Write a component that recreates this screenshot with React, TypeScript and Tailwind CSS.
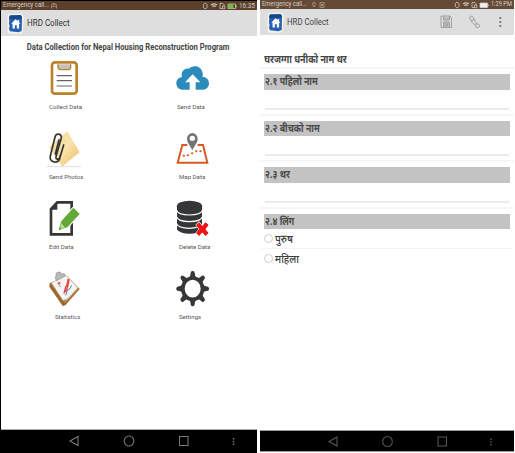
import type { ReactNode } from "react";

function Logo() {
  return (
    <svg viewBox="20 36 52 64" className="block h-[21px] w-[17px] shrink-0">
      <path d="M27 38H64Q70 40 71 48L69 90Q67 98 60 99H29Q22 98 22 90V48Q22 40 27 38Z" fill="#f6f3e4" />
      <path d="M29 43 L62 42 L66 48 L65 91 L55 95 L29 92 L26 84 L28 76 L26 68 L27 58 L26 50Z" fill="#2560b4" />
      <path d="M29 44 L62 43 L65 48 L65 53 L29 56 L27 50Z" fill="#184788" />
      <path d="M46 55 L33 69 H37 V83 H44 V73 H50 V83 H57 V69 H61 L57 64 V57 H53 V60Z" fill="#fff" />
    </svg>
  );
}

function Status({ right }: { right?: boolean }) {
  return (
    <div className={`flex h-[9px] shrink-0 items-center pl-[2px] pr-[3px] leading-[9px] text-[#d5cec8] ${right ? "bg-[#654a35]" : "bg-[#5b3f2b]"}`}>
      <span className={right ? "w-[46px] text-[6.6px] whitespace-nowrap" : "w-[46px] text-[6.8px] whitespace-nowrap"}>
        <span className="inline-block origin-left scale-x-[0.9]">Emergency call...</span>
      </span>
      {right ? (
        <svg viewBox="0 0 16 8" className="ml-[3px] h-2 w-4" fill="none" stroke="#b9aaa0" strokeWidth=".7">
          <path d="M3 1.5a1.4 1.4 0 0 1 1.4 1.5c0 1-1.4 3-1.4 3S1.6 4 1.6 3A1.4 1.4 0 0 1 3 1.5ZM9 1.6h4v4.8H9zM10 3l2 2m0-2-2 2" />
        </svg>
      ) : (
        <svg viewBox="0 0 8 8" className="ml-[1px] h-2 w-2" fill="none" stroke="#a99b91" strokeWidth=".8">
          <path d="M1.5 6.5V3.4Q1.5 1.5 4 1.5T6.5 3.4V6.5M2 5l2-1 2 1M3 2.8h2" />
        </svg>
      )}
      <svg viewBox="0 0 35 8" className="ml-auto h-2 w-[35px] shrink-0" fill="none" stroke="#cfc6bf" strokeWidth=".8">
        <path d="M2 1.4h2.5M2 6.6h2.5M1.4 2v4M5 2v4" />
        <path d="M9 3q3-2.4 6 0M10.3 4.5q1.7-1.3 3.4 0M12 6.2h.1" strokeWidth="1.2" />
        <path d="M18 1.5h3l1 1V4M18 1.5v5h2M20.5 4h2.3v2.7h-2.3z" />
        <path d="M26 2h7.5v4.5H26zM34.3 3.3v2" />
        <path d={right ? "M26.5 2.5h6.5v3.5h-6.5z" : "M26.5 2.5h4.5v3.5h-4.5z"} fill={right ? "#eee" : "#73bd43"} stroke={right ? "#eee" : "#73bd43"} />
      </svg>
      <span className={right ? "ml-[2px] w-[20px] text-[6.6px] whitespace-nowrap" : "ml-[2px] w-[15px] text-[7.4px] whitespace-nowrap"}>
        <span className="inline-block origin-left scale-x-[0.86]">{right ? "1:29 PM" : "16:35"}</span>
      </span>
    </div>
  );
}

function Nav({ right }: { right?: boolean }) {
  return (
    <div className={right ? "h-[22px] shrink-0 border-y border-[#999] bg-black" : "h-6 shrink-0 border-t border-[#aaa] bg-black"}>
      <svg viewBox={right ? "0 2 254 20" : "1 0 256 23"} className={right ? "block h-5 w-[254px]" : "block h-[23px] w-64"} fill="none" stroke={right ? "#565656" : "#777"} strokeWidth="1.1">
        <path d={right ? "M77 8v9l-8-4.5zM178 8h8.5v9H178z" : "M78 6.5v9L70 11zM179.5 6.5h8.5v9h-8.5z"} />
        <ellipse cx={right ? 127.5 : 129} cy={right ? 12.5 : 11} rx="4.8" ry="5" />
        <path d={right ? "M231 9.5v1.4m0 1.4v1.4m0 1.4v1.4" : "M233.5 8v1.4m0 1.4v1.4m0 1.4v1.4"} strokeWidth="1.5" />
      </svg>
    </div>
  );
}

const clipboard = (
  <>
    <rect x="66" y="22" width="74" height="94" rx="9" fill="#fff" stroke="#b9822c" strokeWidth="8" />
    <path d="M84 28v8q0 8 8 8h22q8 0 8-8v-8" fill="#c5c1b9" stroke="#b9822c" strokeWidth="4" />
    <path d="M80 62h46M80 77h46M80 93h46" stroke="#62666b" strokeWidth="3.5" />
  </>
);
const cloud = (
  <>
    <path d="M457 104C445 104 439 94 439 84C439 75 446 67 456 66C451 49 465 37 477 41C486 29 513 31 517 51C520 59 518 63 517 65C529 65 537 74 537 85C537 97 528 104 519 104Z" fill="#2b8bbb" />
    <path d="M488 58 511 82H497V106H479V82H465Z" fill="#fff" />
  </>
);
const photos = (
  <>
    <path d="M50 125H153" stroke="#ddd" strokeWidth="3" />
    <path d="M58 67 112 20 148 82 97 124Z" fill="url(#paper)" stroke="#e4c98c" />
    <defs>
      <linearGradient id="paper" x2="1" y2="1">
        <stop stopColor="#f2d188" />
        <stop offset=".5" stopColor="#fae4ac" />
        <stop offset="1" stopColor="#edbe64" />
      </linearGradient>
    </defs>
    <path d="M99 67 89 98C86 105 76 104 78 95L93 42C99 26 79 22 75 36L61 93C57 112 83 118 89 101L101 60M87 45 76 87" fill="none" stroke="#aaa48f" strokeWidth="6" strokeLinecap="round" />
    <path d="M99 67 89 98C86 105 76 104 78 95L93 42C99 26 79 22 75 36L61 93C57 112 83 118 89 101L101 60M87 45 76 87" fill="none" stroke="#302f2e" strokeWidth="4" strokeLinecap="round" />
  </>
);
const map = (
  <>
    <path d="M472 60H457L443 113H532L519 60H503" fill="none" stroke="#d45b25" strokeWidth="6" />
    <path d="M461 92h1M473 91h1M486 85h1M498 79h1M511 79h1" stroke="#d45b25" strokeWidth="6" strokeLinecap="round" />
    <path d="M487 76C482 63 471 54 471 41A16 17 0 0 1 503 41C503 54 492 63 487 76Z" fill="#777571" />
    <circle cx="487" cy="40" r="8" fill="#fff" />
  </>
);
const edit = (
  <>
    <path d="M82 22H125V118H63V42Z" fill="#fff" stroke="#353638" strokeWidth="8" />
    <path d="M60 42 82 20V44H60Z" fill="#353638" />
    <path d="M86 105 94 79 130 38 149 57 112 97Z" fill="#62a938" stroke="#fff" strokeWidth="6" paintOrder="stroke" />
    <path d="m93 85 12 12-14 6Z" fill="#b4df91" />
    <path d="m89 98-2 7 8-3" fill="#64952d" />
  </>
);
const database = (
  <>
    <path d="M441 34V103A38 16 0 0 0 516 103V34" fill="#353637" />
    <ellipse cx="478.5" cy="34" rx="38" ry="17" fill="#353637" />
    <path d="M440 46Q444 59 478 60Q513 59 517 46M440 66Q444 79 478 80Q513 79 517 66M440 86Q444 99 478 100Q493 99 500 97" fill="none" stroke="#fff" strokeWidth="3.5" />
    <path d="m499 90 8-8 10 11 10-11 8 8-9 13 9 11-8 8-10-10-10 10-8-8 9-11Z" fill="#f01418" stroke="#fff" strokeWidth="4" paintOrder="stroke" />
    <path d="m503 87 28 31m0-31-28 31" stroke="#f01418" strokeWidth="12" />
  </>
);
const statistics = (
  <>
    <path d="m59 55 51-23 39 40-43 49-8 2L58 65Z" fill="#9b6b32" />
    <path d="m62 54 47-22 37 39-41 43Z" fill="#bd8a48" />
    <path d="m65 54 41-25 37 39-30 34-14 4Z" fill="#f5f5f5" stroke="#bbb" />
    <path d="m76 40 2-8q-2-9 7-11 8-1 9 6l9-1 3 7-26 14Z" fill="#b9b9b5" stroke="#898988" strokeWidth="2" />
    <path d="m102 86 5-20q5-4 7-22l3 1-4 20-6 16" fill="none" stroke="#e8433d" strokeWidth="4" />
    <path d="m107 91 5-16q9-1 13-14M88 61l4 5" fill="none" stroke="#557dc2" strokeWidth="3" />
    <circle cx="87" cy="55" r="4" fill="#e95850" />
    <path d="m99 106 21-12-7 9Z" fill="#ccc" />
  </>
);
const gear = (
  <>
    <ellipse cx="488" cy="71" rx="29.5" ry="32" fill="none" stroke="#363738" strokeWidth="11" />
    {[0, 45, 90, 135, 180, 225, 270, 315].map((angle) => (
      <path key={angle} d="M475 41 Q481 34 482 22Q483 18 488 18T494 22Q495 34 501 41Z" fill="#363738" transform={`translate(488 71) scale(.93 1) rotate(${angle}) translate(-488 -71)`} />
    ))}
  </>
);

const items: { label: string; icon: ReactNode; pad: string }[] = [
  { label: "Collect Data", icon: clipboard, pad: "pl-[5px]" },
  { label: "Send Data", icon: cloud, pad: "pl-[5px]" },
  { label: "Send Photos", icon: photos, pad: "pl-[5px]" },
  { label: "Map Data", icon: map, pad: "pl-[7px]" },
  { label: "Edit Data", icon: edit, pad: "pl-[5px]" },
  { label: "Delete Data", icon: database, pad: "pl-[7px]" },
  { label: "Statistics", icon: statistics, pad: "pl-[11px]" },
  { label: "Settings", icon: gear, pad: "pl-[7px]" },
];

function QuestionTitle({ children }: { children: ReactNode }) {
  return (
    <div className="h-[15.5px] bg-[#c3c3c3] pl-px text-[10.5px] leading-[15px] font-bold text-[#484848]">
      <span className="inline-block origin-left scale-x-[0.84]">{children}</span>
    </div>
  );
}

function Question({ title }: { title: string }) {
  return (
    <div className="h-[46.5px] shrink-0 border-t-2 border-[#f6f6f6] px-1 pt-[5px]">
      <QuestionTitle>{title}</QuestionTitle>
      <div className="mx-px h-5 border-b-2 border-[#ebebeb]" />
    </div>
  );
}

function Radio({ label }: { label: string }) {
  return (
    <div className="flex h-[19px] items-center gap-[2px] pl-1 text-[11.8px] leading-[18px] font-medium text-[#3a3a3a]">
      <span className="h-[9px] w-[9px] rounded-full border border-[#ccc]" />
      <span className="inline-block origin-left scale-x-[0.85]">{label}</span>
    </div>
  );
}

export default function App() {
  return (
    <div className="flex h-[453px] w-[515px] overflow-hidden bg-white font-[Roboto,'Noto_Sans',sans-serif]">
      <section className="flex w-[257px] shrink-0 flex-col border-t border-l border-black">
        <Status />
        <header className="flex h-[26px] shrink-0 items-center gap-[3px] bg-[#dedede] pl-[6px] text-[9px] text-[#333]">
          <Logo />
          <span className="origin-left scale-x-[0.89] pt-px">HRD Collect</span>
        </header>
        <main className="flex-1 pt-[6px]">
          <h1 className="origin-left scale-x-[0.923] pl-[28px] text-[8.3px] leading-[10px] font-bold whitespace-nowrap text-[#444]">Data Collection for Nepal Housing Reconstruction Program</h1>
          <div className="mt-[6px] grid grid-cols-[128px_42px] pl-[43px]">
            {items.map(({ label, icon, pad }, index) => (
              <div key={label} className="h-[70px]">
                <svg viewBox={index % 2 ? "426 9 126 120" : "42 9 126 120"} className="block h-10 w-[42px]">{icon}</svg>
                <div className={`${pad} pt-1 text-[6.1px] leading-[9px] whitespace-nowrap text-[#555]`}>{label}</div>
              </div>
            ))}
          </div>
        </main>
        <Nav />
      </section>
      <section className="ml-[3px] flex w-[254px] shrink-0 flex-col font-[Roboto,'Noto_Sans_Devanagari','Noto_Sans',sans-serif]">
        <Status right />
        <header className="flex h-[26px] shrink-0 items-center bg-[#dedede] pl-[7px] text-[9px] text-[#444]">
          <Logo />
          <span className="ml-[3px] origin-left scale-x-[0.87] pt-px">HRD Collect</span>
          <svg viewBox="0 0 76 20" className="ml-auto h-5 w-[76px]" fill="none" stroke="#999" strokeWidth=".9">
            <path d="M3 4h9l1.5 2v9.5H3z" />
            <path d="M5.5 4v4h6V4M5.5 15v-5h6v5M7 12h3M7 13.5h3" fill="#bcbcbc" />
            <ellipse cx="33.8" cy="6.5" rx="1.8" ry="2.5" transform="rotate(-35 33.8 6.5)" />
            <circle cx="39.5" cy="13.8" r="1.9" />
            <path d="m32.5 9 4 3.5 2-1-3-5" />
            <path d="M62.3 5v2m0 2v2m0 2v2" stroke="#777" strokeWidth="1.8" />
          </svg>
        </header>
        <main className="flex-1">
          <h2 className="h-8 origin-left scale-x-[0.84] pt-[17px] pl-[5px] text-[10.6px] leading-[16px] font-bold whitespace-nowrap text-[#444]">घरजग्गा धनीको नाम थर</h2>
          <Question title="२.१ पहिलो नाम" />
          <Question title="२.२ बीचको नाम" />
          <Question title="२.३ थर" />
          <div className="border-t-2 border-[#f6f6f6] px-1 pt-[5px]">
            <QuestionTitle>२.४ लिंग</QuestionTitle>
          </div>
          <Radio label="पुरुष" />
          <div className="mx-[2px] h-px bg-[#f3f3f3]" />
          <Radio label="महिला" />
        </main>
        <Nav right />
        <div className="h-px shrink-0 bg-white" />
      </section>
    </div>
  );
}
